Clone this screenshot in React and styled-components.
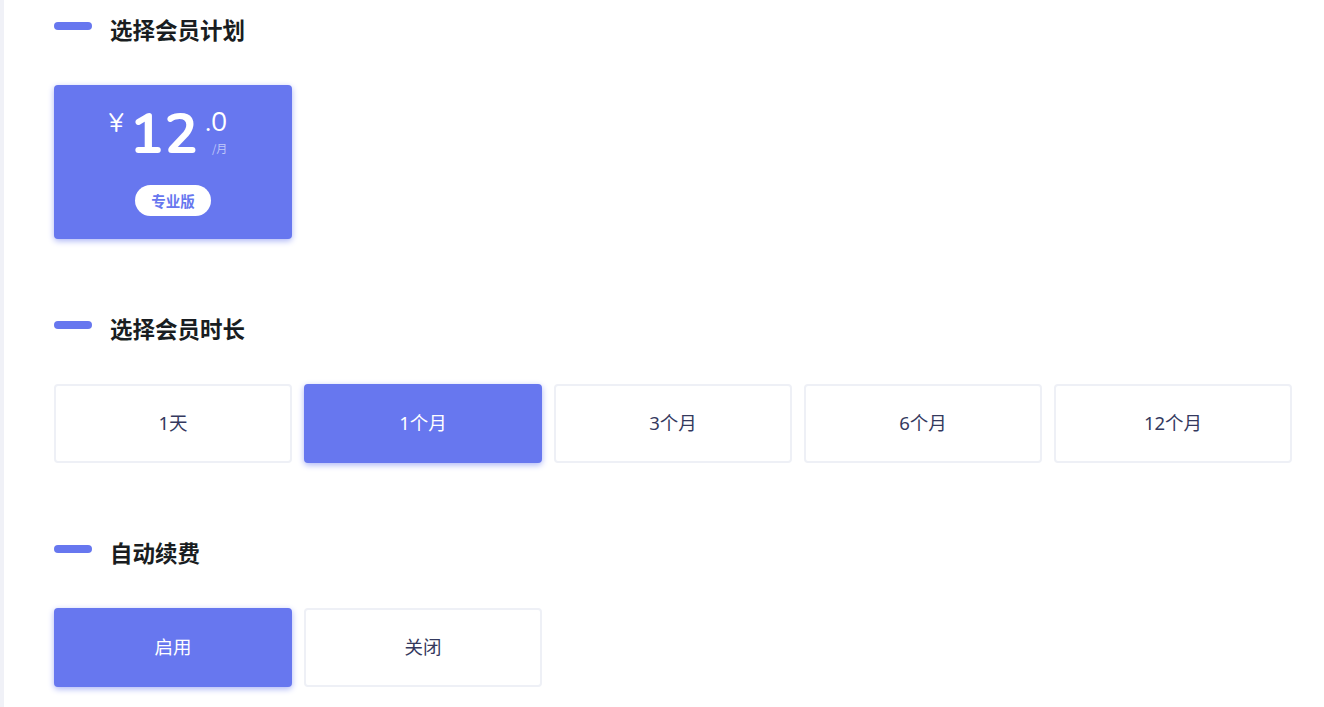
import React, { useState } from 'react'
import styled, { createGlobalStyle } from 'styled-components'

const GlobalStyle = createGlobalStyle`
  body {
    margin: 0;
    background: #fff;
    font-family: "Nunito", "Noto Sans", "Noto Sans CJK SC", sans-serif;
  }
`

const primary = '#6777ef'

const Page = styled.div`
  display: flex;
  min-height: 100vh;
`

const Strip = styled.div`
  width: 4px;
  background: #f0f1f7;
  flex-shrink: 0;
`

const Main = styled.div`
  flex: 1;
  padding: 16px 32px 0 50px;
`

const Section = styled.section`
  margin-bottom: 76px;
`

const Header = styled.div`
  display: flex;
  align-items: center;
  height: 30px;
  margin-bottom: 39px;
`

const Bar = styled.span`
  width: 38px;
  height: 8px;
  border-radius: 4px;
  background: ${primary};
  margin-bottom: 11px;
`

const Title = styled.h2`
  margin: 0 0 0 18px;
  padding-bottom: 4px;
  font-size: 22.5px;
  font-weight: 700;
  line-height: 30px;
  color: #191d21;
  font-family: "Noto Sans CJK SC", sans-serif;
`

const Grid = styled.div`
  display: grid;
  grid-template-columns: repeat(5, 1fr);
  gap: 12px;
`

const Option = styled.div`
  height: 79px;
  box-sizing: border-box;
  padding-bottom: 3px;
  border-radius: 4px;
  border: 2px solid ${({ active }) => (active ? primary : '#eef0f6')};
  background: ${({ active }) => (active ? primary : '#fff')};
  color: ${({ active }) => (active ? '#fff' : '#34395e')};
  box-shadow: ${({ active }) => (active ? '0 2px 6px #acb5f6' : 'none')};
  display: flex;
  align-items: center;
  justify-content: center;
  font-size: 18.5px;
  font-family: "Noto Sans", "Noto Sans CJK SC", sans-serif;
  cursor: pointer;
`

const PlanCard = styled.div`
  height: 154px;
  box-sizing: border-box;
  border-radius: 4px;
  background: ${primary};
  box-shadow: 0 2px 6px #acb5f6;
  color: #fff;
  display: flex;
  flex-direction: column;
  align-items: center;
  padding-top: 22px;
`

const Price = styled.div`
  display: flex;
  align-items: flex-start;
  height: 56px;
  margin-right: 10px;
`

const Currency = styled.span`
  font-size: 25px;
  line-height: 1;
  margin-top: 5px;
  margin-right: 6px;
`

const Amount = styled.span`
  font-size: 56px;
  font-weight: 700;
  line-height: 56px;
  letter-spacing: 1px;
`

const Fraction = styled.div`
  display: flex;
  flex-direction: column;
  align-items: flex-end;
  margin-left: 6px;
`

const Decimal = styled.span`
  font-size: 27px;
  line-height: 1;
  margin-top: 2px;
`

const Unit = styled.span`
  font-size: 11px;
  color: rgba(255, 255, 255, 0.6);
  margin-top: 4px;
  font-family: "Noto Sans CJK SC", sans-serif;
`

const Badge = styled.span`
  margin-top: 22px;
  width: 76px;
  height: 31px;
  border-radius: 16px;
  background: #fff;
  color: ${primary};
  font-size: 14.5px;
  font-weight: 700;
  display: flex;
  align-items: center;
  justify-content: center;
  font-family: "Noto Sans CJK SC", sans-serif;
`

const durations = ['1天', '1个月', '3个月', '6个月', '12个月']

export default function App() {
  const [duration, setDuration] = useState(1)
  const [renew, setRenew] = useState(true)

  return (
    <Page>
      <GlobalStyle />
      <Strip />
      <Main>
        <Section>
          <Header>
            <Bar />
            <Title>选择会员计划</Title>
          </Header>
          <Grid>
            <PlanCard>
              <Price>
                <Currency>¥</Currency>
                <Amount>12</Amount>
                <Fraction>
                  <Decimal>.0</Decimal>
                  <Unit>/月</Unit>
                </Fraction>
              </Price>
              <Badge>专业版</Badge>
            </PlanCard>
          </Grid>
        </Section>

        <Section>
          <Header>
            <Bar />
            <Title>选择会员时长</Title>
          </Header>
          <Grid>
            {durations.map((d, i) => (
              <Option key={d} active={i === duration} onClick={() => setDuration(i)}>
                {d}
              </Option>
            ))}
          </Grid>
        </Section>

        <Section>
          <Header>
            <Bar />
            <Title>自动续费</Title>
          </Header>
          <Grid>
            <Option active={renew} onClick={() => setRenew(true)}>启用</Option>
            <Option active={!renew} onClick={() => setRenew(false)}>关闭</Option>
          </Grid>
        </Section>
      </Main>
    </Page>
  )
}
